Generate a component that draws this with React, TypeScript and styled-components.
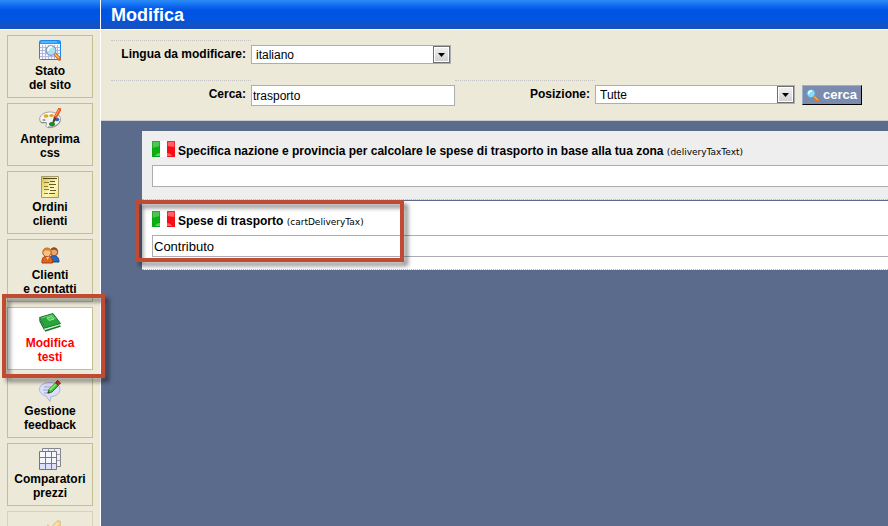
import React from "react";
import styled, { createGlobalStyle, css } from "styled-components";

const GlobalStyle = createGlobalStyle`
  * { box-sizing: border-box; }
  body {
    margin: 0;
    background: #5b6b8c;
    color: #000;
    font-family: "Liberation Sans", Arial, sans-serif;
    font-size: 12px;
  }
  button, input, select { font-family: inherit; }
`;

const Page = styled.div`
  display: grid;
  grid-template-columns: 100px minmax(0, 1fr);
  grid-template-rows: 30px minmax(0, 1fr);
  column-gap: 1px;
  height: 100vh;
  overflow: hidden;
  background: #fff;
`;

const Banner = styled.header`
  display: flex;
  align-items: center;
  padding: 0 10px;
  border-bottom: 1px solid #fff;
  background: linear-gradient(#2d8bf6 0, #1170f3 5px, #0054e3 10px, #0054e3 18px, #1b51b9 29px);
`;

const Title = styled.h1`
  margin: 0;
  color: #fff;
  font-size: 18px;
  line-height: 20px;
`;

const Sidebar = styled.nav`
  display: flex;
  flex-direction: column;
  gap: 5px;
  padding: 5px 7px 0;
  overflow: hidden;
  background: #ece9d8;
`;

const NavLink = styled.a<{ $active?: boolean; $faded?: boolean }>`
  display: flex;
  flex: none;
  flex-direction: column;
  align-items: center;
  gap: 2px;
  min-height: 63px;
  padding: 4px 0 5px;
  border: 1px solid #c3bf8f;
  color: #000;
  font-weight: bold;
  line-height: 14px;
  text-align: center;
  text-decoration: none;
  white-space: pre-line;
  ${(p) => p.$active && css`background: #fff; color: #f00;`}
  ${(p) => p.$faded && css`opacity: 0.5;`}
`;

const Content = styled.main`
  overflow: hidden;
  background: #5b6b8c;
`;

const Filters = styled.form`
  display: flex;
  flex-direction: column;
  gap: 14px;
  padding: 10px 10px 14px;
  border-bottom: 1px solid #ccc;
  background: #ece9d8;
`;

const FilterRow = styled.div`
  display: flex;
  align-items: flex-start;
  height: 26px;
`;

const FieldLabel = styled.label`
  width: 140px;
  padding: 6px 5px 0 0;
  border-top: 1px dotted #c4c4c4;
  font-weight: bold;
  line-height: 15px;
  text-align: right;
`;

const SelectBox = styled.span`
  position: relative;
  display: block;
  width: 200px;
  margin-top: 5px;
`;

const Select = styled.select`
  display: block;
  width: 100%;
  height: 19px;
  padding: 0 20px 0 4px;
  border: 1px solid #abadb3;
  border-radius: 0;
  background: #fff;
  color: #000;
  font-size: 12px;
  appearance: none;
`;

const SelectArrow = styled.span`
  position: absolute;
  top: 1px;
  right: 1px;
  display: grid;
  place-items: center;
  width: 17px;
  height: 17px;
  border: 1px solid #707070;
  box-shadow: inset 0 0 0 1px #fff;
  background: linear-gradient(#f2f2f2, #cfcfcf);
  pointer-events: none;
`;

const TextInput = styled.input`
  height: 21px;
  padding: 0 1px;
  border: 1px solid #abadb3;
  background: #fff;
  color: #000;
  font-size: 12px;
`;

const SearchInput = styled(TextInput)`
  width: 204px;
  margin-top: 5px;
`;

const SearchButton = styled.button`
  display: flex;
  align-items: center;
  gap: 4px;
  height: 20px;
  margin: 5px 0 0 7px;
  padding: 0 4px 0 3px;
  border: 1px solid;
  border-color: #9db0cb #000 #000 #9db0cb;
  background: #7b8bae;
  color: #fff;
  font-size: 13px;
  font-weight: bold;
  line-height: 16px;
`;

const Records = styled.section`
  display: flex;
  flex-direction: column;
  gap: 1px;
  padding: 10px 0 0 41px;
`;

const Record = styled.div<{ $shaded?: boolean }>`
  display: flex;
  flex-direction: column;
  gap: 8px;
  height: 69px;
  padding: 10px 0 0 10px;
  border-bottom: 1px dotted #b8b8b8;
  background: ${(p) => (p.$shaded ? "#eee" : "#fff")};
`;

const RecordLabel = styled.label`
  display: flex;
  align-items: flex-start;
  gap: 3px;
  height: 16px;
  font-weight: bold;
  line-height: 20px;
  white-space: nowrap;
`;

const Key = styled.small`
  font-family: "DejaVu Sans", Verdana, sans-serif;
  font-size: 9px;
  font-weight: normal;
  line-height: 16px;
`;

const RecordInput = styled(TextInput)`
  width: 100%;
  height: 22px;
  border-right: 0;
  font-size: 13px;
`;

const Highlight = styled.div<{ $x: number; $y: number; $w: number; $h: number }>`
  position: absolute;
  left: ${(p) => p.$x}px;
  top: ${(p) => p.$y}px;
  width: ${(p) => p.$w}px;
  height: ${(p) => p.$h}px;
  border: 4px solid #c04b32;
  filter: drop-shadow(4px 4px 2px rgba(0, 0, 0, 0.45));
  pointer-events: none;
`;

const Icon = ({ children }: { children: React.ReactNode }) => (
  <svg width="22" height="22" viewBox="0 0 22 22" aria-hidden="true">{children}</svg>
);

const SiteIcon = () => (
  <Icon>
    <rect x="0.5" y="0.5" width="21" height="19" rx="1" fill="#f4f8ff" stroke="#1689f5" />
    <path d="M1 1h20v3H1z" fill="#2297fa" />
    <path d="M2 2h16" stroke="#8dd0ff" />
    <path d="M3.500 5v14M6.500 5v14M9.500 5v14M12.500 5v14M15.500 5v14M18.500 5v14M1 7.500h20M1 10.500h20M1 13.500h20M1 16.500h20" stroke="#b3b9df" />
    <path d="m16 14 4.500 5" stroke="#d76a20" strokeWidth="3.500" strokeLinecap="round" />
    <path d="m16 14 4 4.300" stroke="#ffc05a" strokeWidth="1.500" />
    <circle cx="12" cy="10.500" r="4.800" fill="#a9e3f8" stroke="#859eb9" strokeWidth="1.300" />
    <path d="M9 11c0-3 2-4 4-4" fill="none" stroke="#fff" strokeWidth="1.800" />
  </Icon>
);

const PaletteIcon = () => (
  <Icon>
    <path d="M1 13C-1 8 5 3.500 12 4c6 .4 10 4 9.500 8-.6 5-7 8.500-13 7.500-2.500-.5-1.500-2.500-1-3.500.4-1.500-1-1.500-3-1.200C2.500 15 1.500 14.500 1 13Z" fill="#f1f1f1" stroke="#a4a4a4" />
    <path d="M1.500 14c2 1.500 5-.5 6.500 1.500M9 19c5 .5 11-2 12-6" fill="none" stroke="#858585" />
    <path d="M3 10c1-3 5-5 10-4.500" fill="none" stroke="#fff" strokeWidth="1.500" />
    <ellipse cx="7" cy="8" rx="2.500" ry="1.700" fill="#e3ad16" />
    <ellipse cx="12.500" cy="7.500" rx="2" ry="1.600" fill="#e0a025" />
    <ellipse cx="5" cy="12" rx="1.600" ry="1.100" fill="#9a9a9a" />
    <ellipse cx="18" cy="11.500" rx="2.300" ry="1.800" fill="#2c61c9" />
    <ellipse cx="13" cy="16" rx="3" ry="2" fill="#198a25" />
    <path d="M20.500 1.500 16.500 9" stroke="#ec5a22" strokeWidth="3.600" strokeLinecap="round" />
    <path d="M20 1.500 16.500 8" stroke="#ffa678" />
    <path d="m17.500 10-2 4-2 1.500.2-2.500 1.300-4Z" fill="#544428" />
  </Icon>
);

const OrderIcon = () => (
  <Icon>
    <defs>
      <linearGradient id="paper" x1="0" x2="1" y1="0" y2="1">
        <stop stopColor="#d3bd45" /><stop offset="0.6" stopColor="#fff9bd" /><stop offset="1" stopColor="#efe078" />
      </linearGradient>
    </defs>
    <path d="M2.500.5h17v21h-17z" fill="url(#paper)" stroke="#a29b68" />
    <path d="M4 2.500h14" stroke="#51491c" />
    <path d="M5 6.500h5M5 10.500h4M5 13.500h5M5 17.500h4" stroke="#8e7d28" />
    <path d="M11 5.500h5M10 8.500h7M11 11.500h4M11 14.500h6M10 17.500h6" stroke="#635b31" />
  </Icon>
);

const ClientsIcon = () => (
  <Icon>
    <path d="M10 18c0-5 2-6.500 5-6.500s5 2.500 5 6.500Z" fill="#2569be" stroke="#174380" />
    <circle cx="15" cy="8" r="3.800" fill="#e9a66a" stroke="#914820" />
    <path d="M11.500 7c0-5 7-5 7 0-2-1-5-2-7 0Z" fill="#9b4618" />
    <path d="M3 19c-.3-5 1.500-7 5-7s6 2 5.500 7Z" fill="#e0651c" stroke="#a33b10" />
    <path d="m7 12 1.500 4 2-4Z" fill="#ffe0b0" />
    <circle cx="8" cy="8.500" r="4.200" fill="#f7c183" stroke="#a9521d" />
    <path d="M3.800 8c-.5-6 8.500-6 8.500-.5C9.500 6 6 5.500 3.800 8Z" fill="#d77b26" />
  </Icon>
);

const BookIcon = () => (
  <Icon>
    <path d="M0 5.500 5.500 16.500v2.500L.5 9.500Z" fill="#0c6920" />
    <path d="m6 16.500 15-4.500v2L6.500 18.500Z" fill="#d9e6d4" />
    <path d="M.5 5.500 14 1.500 21.500 11.500 6 16Z" fill="#28a53b" stroke="#14792a" />
    <path d="m2.500 6 11-3.200 3 4.200" fill="none" stroke="#6bd376" />
    <path d="m8 6 5-1.500 2 2.500-5 1.500Z" fill="#58bf60" stroke="#9be79e" />
    <path d="m6 19 15.500-5" stroke="#0e7d22" strokeWidth="1.500" />
  </Icon>
);

const FeedbackIcon = () => (
  <Icon>
    <path d="M11 2.500c6 0 10 3 10 7s-4 7-9 7l-1 5-4-5.500C3 15 .5 12.500.5 9.500c0-4 4-7 10.500-7Z" fill="#dcdffb" stroke="#adb1dc" />
    <path d="M5 7h8M4 10h8M5 13h6" stroke="#9a9fc4" />
    <path d="m9 13 1-3.500 6.500-6.500L19.500 5.500l-6.500 6.500Z" fill="#3fc035" stroke="#257b20" />
    <path d="m11 10 6-6" stroke="#9cf16f" strokeWidth="1.500" />
    <path d="M16.500 2.500 18.500.5l3 2.500-2 2Z" fill="#df3129" stroke="#8e2119" />
    <path d="m8.500 13.500.5-2.500 2 1.800Z" fill="#453721" />
  </Icon>
);

const CompareIcon = () => (
  <Icon>
    <path d="M3.500.5h18v18h-18z" fill="#eceeff" stroke="#85858d" />
    <path d="M9.500.5v18M15.500.5v18M3.500 6.500h18M3.500 12.500h18" stroke="#a5a5b1" />
    <path d="M.5 3.500h17v18H.5z" fill="#f6f6ff" />
    <path d="M1 15h16.500v6.500H1z" fill="#dfe0fb" />
    <path d="M6.500 3.500v18M12.500 3.500v18M.5 9.500h17M.5 15.500h17M.5 3.500h17v18H.5z" fill="none" stroke="#777" />
  </Icon>
);

const PencilIcon = () => (
  <Icon>
    <path d="m14 9 4-4c1-1 4-.500 4 1v3L11 20l-5 2Z" fill="#f3b83c" stroke="#dba644" />
    <path d="m9 8 2 3-4 5-2-2Z" fill="#dc9654" />
    <path d="m13 13 6-6" stroke="#ffe29a" strokeWidth="2" />
  </Icon>
);

const Lens = () => (
  <svg width="13" height="14" viewBox="0 0 13 14" aria-hidden="true">
    <path d="m8.500 9 3 3.500" stroke="#e97921" strokeWidth="2.800" strokeLinecap="round" />
    <path d="m8.500 8.500 3 3.300" stroke="#ffd06c" />
    <circle cx="5" cy="5.500" r="4.200" fill="#8bd8fa" stroke="#5c9dcc" />
    <path d="M2.500 6c0-2.500 1.500-3 3.500-3" fill="none" stroke="#fff" strokeWidth="1.500" />
  </svg>
);

const Flag = () => (
  <svg width="23" height="16" viewBox="0 0 23 16" aria-hidden="true">
    <path d="M0 0h8v16H0z" fill="#08b010" />
    <path d="M8 0h7v16H8z" fill="#fff" />
    <path d="M15 0h8v16h-8z" fill="#fa0c14" />
    <path d="M0 0h8v5L0 7z" fill="#4fc455" />
    <path d="M15 0h8v6l-8-1z" fill="#ff6066" />
    <path d="M.5.5h7v15h-7z" fill="none" stroke="#08a010" opacity="0.600" />
    <path d="M15.500.5h7v15h-7z" fill="none" stroke="#f0101a" opacity="0.700" />
    <path d="M3 15c1-2 3-3 5-3v3ZM15 12c2 0 4 1 5 3h-5Z" fill="#fff" opacity="0.350" />
  </svg>
);

const sections = [
  { label: "Stato\ndel sito", icon: <SiteIcon /> },
  { label: "Anteprima\ncss", icon: <PaletteIcon /> },
  { label: "Ordini\nclienti", icon: <OrderIcon /> },
  { label: "Clienti\ne contatti", icon: <ClientsIcon /> },
  { label: "Modifica\ntesti", icon: <BookIcon />, active: true },
  { label: "Gestione\nfeedback", icon: <FeedbackIcon /> },
  { label: "Comparatori\nprezzi", icon: <CompareIcon /> },
  { label: "", icon: <PencilIcon />, faded: true },
];

const records = [
  {
    key: "deliveryTaxText",
    text: "Specifica nazione e provincia per calcolare le spese di trasporto in base alla tua zona",
    value: "",
  },
  { key: "cartDeliveryTax", text: "Spese di trasporto", value: "Contributo" },
];

function DropDown({ id, option }: { id: string; option: string }) {
  return (
    <SelectBox>
      <Select id={id}><option>{option}</option></Select>
      <SelectArrow>
        <svg width="7" height="4" viewBox="0 0 7 4" aria-hidden="true"><path d="M0 0h7L3.500 4Z" /></svg>
      </SelectArrow>
    </SelectBox>
  );
}

export default function App() {
  return (
    <>
      <GlobalStyle />
      <Page>
        <Banner as="div" />
        <Banner><Title>Modifica</Title></Banner>
        <Sidebar>
          {sections.map((s) => (
            <NavLink key={s.label} href="#" $active={s.active} $faded={s.faded}>
              {s.icon}
              <span>{s.label}</span>
            </NavLink>
          ))}
        </Sidebar>
        <Content>
          <Filters onSubmit={(e) => e.preventDefault()}>
            <FilterRow>
              <FieldLabel htmlFor="lingua">Lingua da modificare:</FieldLabel>
              <DropDown id="lingua" option="italiano" />
            </FilterRow>
            <FilterRow>
              <FieldLabel htmlFor="testo">Cerca:</FieldLabel>
              <SearchInput id="testo" defaultValue="trasporto" />
              <FieldLabel htmlFor="posizione">Posizione:</FieldLabel>
              <DropDown id="posizione" option="Tutte" />
              <SearchButton type="submit"><Lens />cerca</SearchButton>
            </FilterRow>
          </Filters>
          <Records>
            {records.map((r, i) => (
              <Record key={r.key} $shaded={i % 2 === 0}>
                <RecordLabel htmlFor={r.key}>
                  <Flag />
                  <span>{r.text} <Key>({r.key})</Key></span>
                </RecordLabel>
                <RecordInput id={r.key} defaultValue={r.value} />
              </Record>
            ))}
          </Records>
        </Content>
      </Page>
      <Highlight $x={2} $y={294} $w={103} $h={84} />
      <Highlight $x={135} $y={200} $w={269} $h={62} />
    </>
  );
}
